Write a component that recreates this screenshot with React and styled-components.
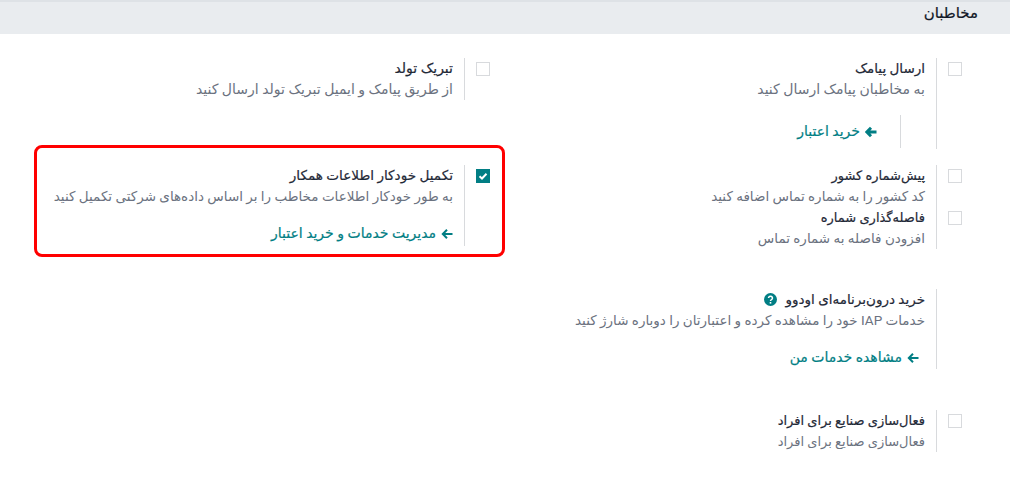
import styled, { createGlobalStyle } from "styled-components";

const Global = createGlobalStyle`
  html, body { margin: 0; padding: 0; background: #fff; }
  body { font-family: Roboto, "DejaVu Sans", sans-serif; font-size: 14px; line-height: 21px; color: #374151; }
`;

const Page = styled.div`
  direction: rtl;
  width: 1010px;
  height: 494px;
  overflow: hidden;
`;

const Header = styled.div`
  height: 32px;
  background: #e9ecef;
  border-top: 2px solid #dee2e6;
  padding-right: 32px;
  font-size: 15px;
  -webkit-text-stroke: 0.2px #111827;
  line-height: 23px;
  color: #111827;
`;

const Grid = styled.div`
  display: grid;
  grid-template-columns: 472px 472px;
  padding: 24px 40px 0 0;
  justify-content: start;
`;

const Column = styled.div`
  display: flex;
  flex-direction: column;
`;

const Setting = styled.div`
  position: relative;
  display: flex;
  margin-top: ${(p) => p.$top || 0}px;
`;

const CheckCell = styled.div`
  width: 33px;
  flex: none;
  padding: 4px 8px 0 0;
  box-sizing: border-box;
`;

const Box = styled.div`
  width: 14px;
  height: 14px;
  box-sizing: border-box;
  border: 1px solid ${(p) => (p.$checked ? "#017e84" : "#d8dadd")};
  background: ${(p) => (p.$checked ? "#017e84" : "#fff")};
  display: flex;
  align-items: center;
  justify-content: center;
`;

const Body = styled.div`
  border-right: 1px solid #d8dadd;
  padding-right: 11px;
  flex: 1;
  min-height: ${(p) => p.$min || 0}px;
`;

const Title = styled.div`
  color: #1f2937;
  -webkit-text-stroke: 0.2px #1f2937;
  font-size: ${(p) => p.$size || 14}px;
  display: flex;
  align-items: center;
  gap: 9px;
`;

const Desc = styled.div`
  color: #6b7280;
  font-size: ${(p) => p.$size || 14}px;
`;

const LinkRow = styled.div`
  margin-top: 16px;
  color: #017e84;
  -webkit-text-stroke: 0.2px #017e84;
  display: flex;
  align-items: center;
  gap: 5px;
  padding-right: ${(p) => p.$pad || 0}px;
`;

const Stub = styled.div`
  margin: 15px 24px 0 0;
  width: 115px;
  border-right: 1px solid #d8dadd;
  padding: 6px 23px 6px 0;
  color: #017e84;
  -webkit-text-stroke: 0.2px #017e84;
  display: flex;
  align-items: center;
  gap: 5px;
  white-space: nowrap;
`;

const Highlight = styled.div`
  position: absolute;
  top: -20px;
  bottom: -11px;
  right: -7px;
  width: 471px;
  border: 3px solid #f00;
  border-radius: 8px;
  pointer-events: none;
  box-sizing: border-box;
`;

const Arrow = ({ size = 12, weight = 2 }) => (
  <svg width={size} height={size} viewBox="0 0 12 12" fill="none" stroke="#017e84" strokeWidth={weight}>
    <path d="M11.5 6H2M6 1.8 1.8 6 6 10.2" />
  </svg>
);

const Check = () => (
  <svg width="10" height="10" viewBox="0 0 10 10" fill="none" stroke="#fff" strokeWidth="2">
    <path d="M1.5 5.2 4 7.5 8.5 2.8" />
  </svg>
);

const Help = () => (
  <svg width="13" height="13" viewBox="0 0 13 13">
    <circle cx="6.5" cy="6.5" r="6.5" fill="#017e84" />
    <path d="M4.5 5a2 1.8 0 1 1 3 1.6c-.7.4-1 .7-1 1.3" fill="none" stroke="#fff" strokeWidth="1.5" />
    <rect x="5.7" y="9" width="1.6" height="1.6" fill="#fff" />
  </svg>
);

function App() {
  return (
    <Page>
      <Global />
      <Header>مخاطبان</Header>
      <Grid>
        <Column>
          <Setting>
            <CheckCell><Box /></CheckCell>
            <Body $min={91}>
              <Title $size={13.5}>ارسال پیامک</Title>
              <Desc>به مخاطبان پیامک ارسال کنید</Desc>
              <Stub><Arrow weight={3} />خرید اعتبار</Stub>
            </Body>
          </Setting>
          <Setting $top={16}>
            <CheckCell><Box /></CheckCell>
            <Body>
              <Title $size={13}>پیش‌شماره کشور</Title>
              <Desc $size={13.5}>کد کشور را به شماره تماس اضافه کنید</Desc>
            </Body>
          </Setting>
          <Setting>
            <CheckCell><Box /></CheckCell>
            <Body>
              <Title $size={13}>فاصله‌گذاری شماره</Title>
              <Desc $size={13.5}>افزودن فاصله به شماره تماس</Desc>
            </Body>
          </Setting>
          <Setting $top={40}>
            <CheckCell />
            <Body $min={80}>
              <Title $size={13.5}>خرید درون‌برنامه‌ای اودوو <Help /></Title>
              <Desc $size={13.5}>خدمات IAP خود را مشاهده کرده و اعتبارتان را دوباره شارژ کنید</Desc>
              <LinkRow $pad={6}><Arrow />مشاهده خدمات من</LinkRow>
            </Body>
          </Setting>
          <Setting $top={41}>
            <CheckCell><Box /></CheckCell>
            <Body>
              <Title $size={13}>فعال‌سازی صنایع برای افراد</Title>
              <Desc $size={13}>فعال‌سازی صنایع برای افراد</Desc>
            </Body>
          </Setting>
        </Column>
        <Column>
          <Setting>
            <CheckCell><Box /></CheckCell>
            <Body>
              <Title>تبریک تولد</Title>
              <Desc>از طریق پیامک و ایمیل تبریک تولد ارسال کنید</Desc>
            </Body>
          </Setting>
          <Setting $top={65}>
            <Highlight />
            <CheckCell><Box $checked><Check /></Box></CheckCell>
            <Body $min={81}>
              <Title $size={13.6}>تکمیل خودکار اطلاعات همکار</Title>
              <Desc $size={13.5}>به طور خودکار اطلاعات مخاطب را بر اساس داده‌های شرکتی تکمیل کنید</Desc>
              <LinkRow><Arrow />مدیریت خدمات و خرید اعتبار</LinkRow>
            </Body>
          </Setting>
        </Column>
      </Grid>
    </Page>
  );
}

export default App;
